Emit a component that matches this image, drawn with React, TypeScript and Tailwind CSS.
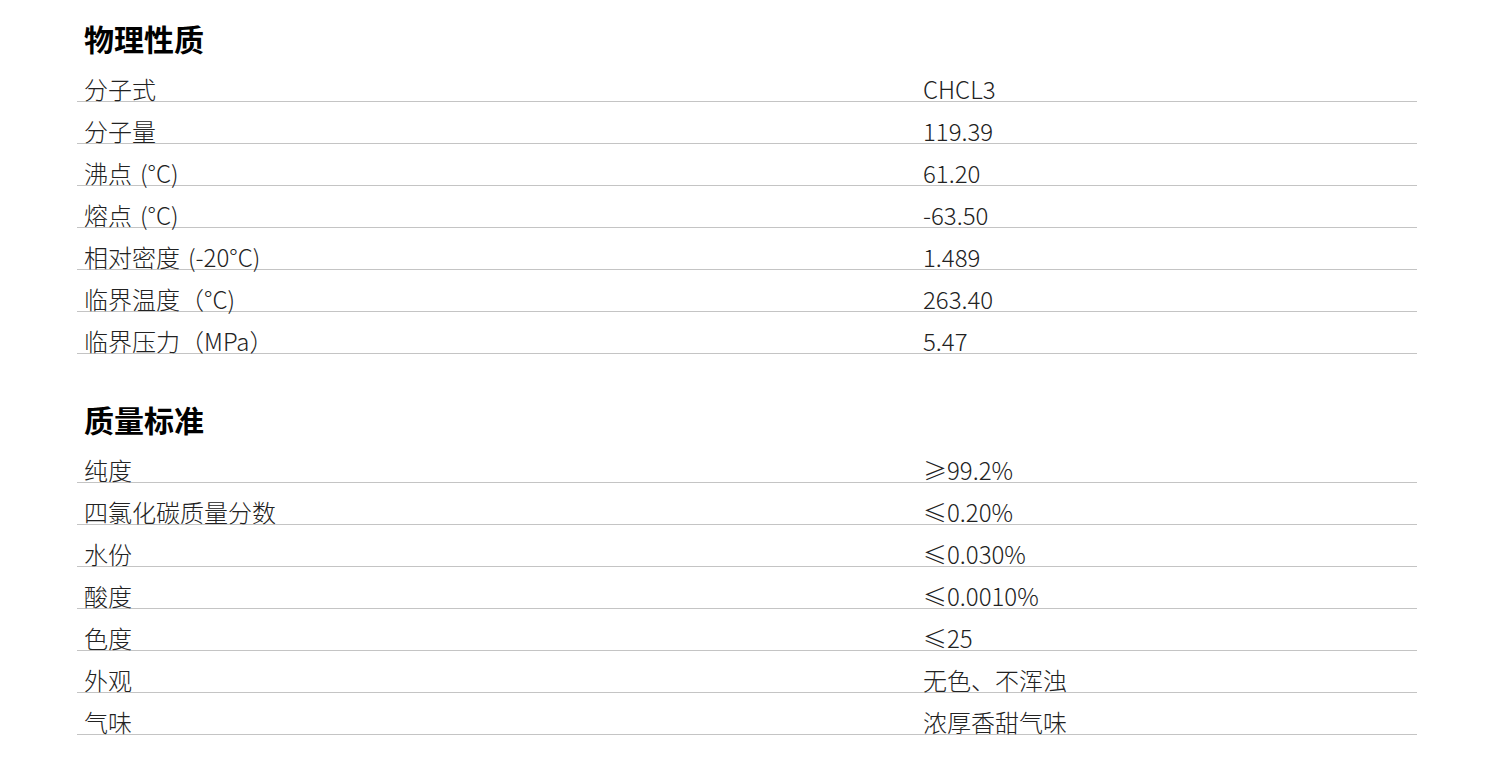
import React from "react";

const sections: { title: string; rows: [string, string][] }[] = [
  {
    title: "物理性质",
    rows: [
      ["分子式", "CHCL3"],
      ["分子量", "119.39"],
      ["沸点\u2004(°C)", "61.20"],
      ["熔点\u2004(°C)", "-63.50"],
      ["相对密度\u2004(-20°C)", "1.489"],
      ["临界温度（°C)", "263.40"],
      ["临界压力（MPa）", "5.47"],
    ],
  },
  {
    title: "质量标准",
    rows: [
      ["纯度", "≥99.2%"],
      ["四氯化碳质量分数", "≤0.20%"],
      ["水份", "≤0.030%"],
      ["酸度", "≤0.0010%"],
      ["色度", "≤25"],
      ["外观", "无色、不浑浊"],
      ["气味", "浓厚香甜气味"],
    ],
  },
];

export default function App() {
  return (
    <div
      className="w-[1500px] h-[769px] bg-white text-[#222] overflow-hidden"
      style={{ fontFamily: '"Noto Sans CJK SC", "Noto Sans", sans-serif' }}
    >
      <div className="ml-[77px] w-[1340px] pt-[18px] flex flex-col gap-[45px]">
        {sections.map((s) => (
          <div key={s.title} className="flex flex-col">
            <h2 className="pl-[7px] text-[30px] leading-[40px] font-bold text-black h-[40px] mb-[2px]">
              {s.title}
            </h2>
            {s.rows.map(([k, v]) => (
              <div
                key={k}
                className="flex h-[42px] border-b border-[#c4c4c4] items-end text-[24px] leading-[30px] font-light"
              >
                <div className="w-[846px] pl-[7px] -mb-[3px]">{k}</div>
                <div className="flex-1 -mb-[3px]">{v}</div>
              </div>
            ))}
          </div>
        ))}
      </div>
    </div>
  );
}
